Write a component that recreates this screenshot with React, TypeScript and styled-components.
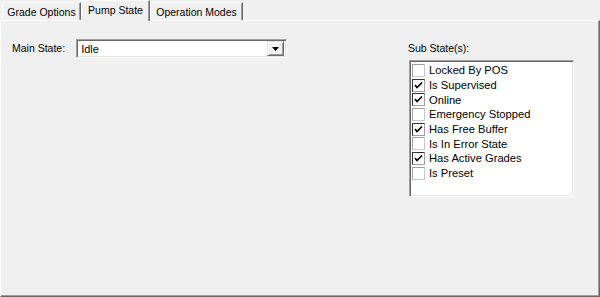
import { createGlobalStyle } from 'styled-components';
import styled from 'styled-components';

const GlobalStyle = createGlobalStyle`
  html, body {
    margin: 0;
    padding: 0;
    background: #f0f0f0;
  }
  body {
    font-family: "Liberation Sans", Arial, sans-serif;
    font-size: 10.5px;
    color: #000;
  }
`;

const Window = styled.div`
  width: 600px;
  height: 297px;
  display: flex;
  flex-direction: column;
  background: #f0f0f0;
  overflow: hidden;
`;

const TabStrip = styled.div`
  display: flex;
  align-items: flex-end;
  height: 20px;
  padding-left: 2px;
`;

const Tab = styled.div<{ $active?: boolean; $width: number }>`
  position: relative;
  z-index: ${p => (p.$active ? 2 : 1)};
  display: flex;
  align-items: center;
  justify-content: center;
  box-sizing: border-box;
  width: ${p => p.$width}px;
  height: ${p => (p.$active ? 21 : 18)}px;
  margin-bottom: ${p => (p.$active ? -1 : 0)}px;
  padding-bottom: ${p => (p.$active ? 3 : 0)}px;
  background: #f0f0f0;
  border-top: 1px solid #fff;
  border-left: 1px solid #fff;
  border-right: 1px solid #696969;
  box-shadow: inset -1px 0 0 #a0a0a0;
  white-space: nowrap;
`;

const Panel = styled.div`
  flex: 1;
  box-sizing: border-box;
  display: flex;
  padding: 18px 0 0 12px;
  border-top: 1px solid #fff;
  border-left: 1px solid #fff;
  border-right: 1px solid #696969;
  border-bottom: 1px solid #696969;
  box-shadow: inset -1px -1px 0 #a0a0a0;
`;

const MainGroup = styled.div`
  width: 395px;
  display: flex;
  align-items: flex-start;
  gap: 11px;
`;

const Label = styled.div`
  line-height: 14px;
  height: 14px;
`;

const MainLabel = styled(Label)`
  margin-top: 2px;
  margin-left: -1px;
`;

const Combo = styled.div`
  box-sizing: border-box;
  width: 211px;
  height: 19px;
  display: flex;
  align-items: center;
  background: #fff;
  border-top: 1px solid #a0a0a0;
  border-left: 1px solid #a0a0a0;
  border-right: 1px solid #fff;
  border-bottom: 1px solid #fff;
  box-shadow: inset 1px 1px 0 #696969, inset -1px -1px 0 #e3e3e3;
  padding: 2px;
`;

const ComboText = styled.div`
  flex: 1;
  padding-left: 2px;
  font-size: 11px;
`;

const DropButton = styled.div`
  box-sizing: border-box;
  width: 17px;
  height: 15px;
  display: flex;
  align-items: center;
  justify-content: center;
  background: #f0f0f0;
  border-top: 1px solid #e3e3e3;
  border-left: 1px solid #e3e3e3;
  border-right: 1px solid #696969;
  border-bottom: 1px solid #696969;
  box-shadow: inset 1px 1px 0 #fff, inset -1px -1px 0 #a0a0a0;
`;

const SubGroup = styled.div`
  display: flex;
  flex-direction: column;
  gap: 5px;
  margin-top: 2px;
`;

const ListBox = styled.div`
  box-sizing: border-box;
  width: 165px;
  height: 137px;
  margin-left: 1px;
  background: #fff;
  border-top: 1px solid #a0a0a0;
  border-left: 1px solid #a0a0a0;
  border-right: 1px solid #fff;
  border-bottom: 1px solid #fff;
  box-shadow: inset 1px 1px 0 #696969, inset -1px -1px 0 #e3e3e3;
  padding: 2px 1px 1px 2px;
`;

const Item = styled.div`
  display: flex;
  align-items: center;
  gap: 4px;
  height: 14.7px;
  font-size: 11.2px;
  white-space: nowrap;
`;

const Box = styled.div<{ $checked: boolean }>`
  box-sizing: border-box;
  width: 13px;
  height: 13px;
  display: flex;
  align-items: center;
  justify-content: center;
  background: #fff;
  border: 1px solid ${p => (p.$checked ? '#333' : '#a0a0a0')};
  border-right-color: ${p => (p.$checked ? '#a0a0a0' : '#c8c8c8')};
  border-bottom-color: ${p => (p.$checked ? '#a0a0a0' : '#c8c8c8')};
`;

const subStates = [
  { name: 'Locked By POS', checked: false },
  { name: 'Is Supervised', checked: true },
  { name: 'Online', checked: true },
  { name: 'Emergency Stopped', checked: false },
  { name: 'Has Free Buffer', checked: true },
  { name: 'Is In Error State', checked: false },
  { name: 'Has Active Grades', checked: true },
  { name: 'Is Preset', checked: false },
];

function Check() {
  return (
    <svg width="9" height="9" viewBox="0 0 9 9">
      <path d="M1 4 L3 6.5 L8 1.5" fill="none" stroke="#000" strokeWidth="1.7" />
    </svg>
  );
}

export default function App() {
  return (
    <Window>
      <GlobalStyle />
      <TabStrip>
        <Tab $width={79}>Grade Options</Tab>
        <Tab $width={69} $active>Pump State</Tab>
        <Tab $width={93}>Operation Modes</Tab>
      </TabStrip>
      <Panel>
        <MainGroup>
          <MainLabel>Main State:</MainLabel>
          <Combo>
            <ComboText>Idle</ComboText>
            <DropButton>
              <svg width="7" height="4" viewBox="0 0 7 4">
                <path d="M0 0 H7 L3.5 4 Z" fill="#000" />
              </svg>
            </DropButton>
          </Combo>
        </MainGroup>
        <SubGroup>
          <Label>Sub State(s):</Label>
          <ListBox>
            {subStates.map(s => (
              <Item key={s.name}>
                <Box $checked={s.checked}>{s.checked && <Check />}</Box>
                {s.name}
              </Item>
            ))}
          </ListBox>
        </SubGroup>
      </Panel>
    </Window>
  );
}
